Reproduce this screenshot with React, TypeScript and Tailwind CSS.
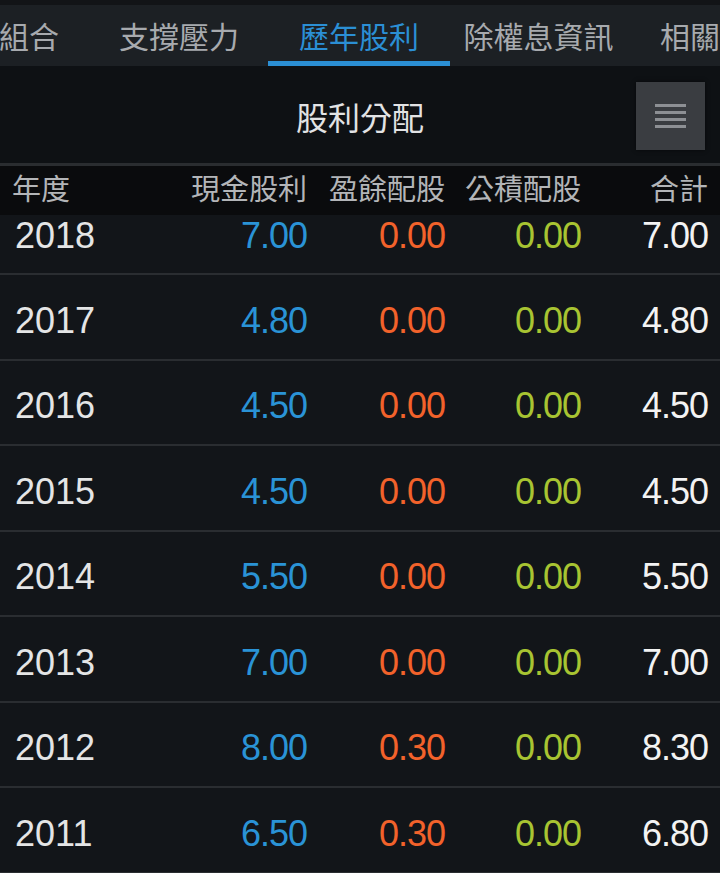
const tabs = [
  { label: '組合', w: 'w-[122px]', inner: 'justify-center' },
  { label: '支撐壓力', w: 'w-[178px]', inner: 'justify-center' },
  { label: '歷年股利', w: 'w-[182px]', inner: 'justify-center', active: true },
  { label: '除權息資訊', w: 'w-[177px]', inner: 'justify-center' },
  { label: '相關', w: 'w-[100px]', inner: 'justify-start pl-[33px]' },
]

const rows = [
  ['2018', '7.00', '0.00', '0.00', '7.00'],
  ['2017', '4.80', '0.00', '0.00', '4.80'],
  ['2016', '4.50', '0.00', '0.00', '4.50'],
  ['2015', '4.50', '0.00', '0.00', '4.50'],
  ['2014', '5.50', '0.00', '0.00', '5.50'],
  ['2013', '7.00', '0.00', '0.00', '7.00'],
  ['2012', '8.00', '0.30', '0.00', '8.30'],
  ['2011', '6.50', '0.30', '0.00', '6.80'],
]

const cjk = "font-['Noto_Sans_CJK_TC','Noto_Sans_CJK_SC',sans-serif]"
const num = "font-['Liberation_Sans',Arial,sans-serif]"

function MenuButton() {
  return (
    <button className="w-[69px] h-[68px] bg-[#3a3d41] flex flex-col items-center justify-center gap-[4px] shadow-[0_0_4px_rgba(0,0,0,0.6)]">
      <span className="block w-[31px] h-[3px] bg-[#8d9094]" />
      <span className="block w-[31px] h-[3px] bg-[#8d9094]" />
      <span className="block w-[31px] h-[3px] bg-[#8d9094]" />
      <span className="block w-[31px] h-[3px] bg-[#8d9094]" />
    </button>
  )
}

export default function App() {
  return (
    <div className={`w-[720px] h-[873px] overflow-hidden bg-[#121519] ${cjk}`}>
      {/* tab strip */}
      <div className="h-[5px] bg-[#121417]" />
      <div className="h-[61px] bg-[#1c2024] overflow-hidden">
        <div className="flex ml-[-32px] h-full">
          {tabs.map((t) => (
            <div key={t.label} className={`${t.w} shrink-0 h-full flex flex-col whitespace-nowrap`}>
              <div className={`flex flex-1 ${t.inner}`}>
                <span
                  className={`pt-[10px] text-[30px] leading-[40px] ${
                    t.active ? 'text-[#2b8fd4]' : 'text-[#a7aaae]'
                  }`}
                >
                  {t.label}
                </span>
              </div>
              <span className={`block w-full h-[5px] ${t.active ? 'bg-[#2b8fd4]' : ''}`} />
            </div>
          ))}
        </div>
      </div>

      {/* title */}
      <div className="h-[97px] bg-[#0e1114] flex items-center justify-center relative">
        <h1 className="text-[32px] text-[#e2e3e4] pt-[2px]">股利分配</h1>
        <div className="absolute right-[15px] top-[16px]">
          <MenuButton />
        </div>
      </div>
      <div className="h-[3px] bg-[#2a2d30]" />

      {/* table header */}
      <div className="h-[49px] bg-[#0a0b0d] grid grid-cols-[120px_187px_138px_136px_127px] items-center text-[29px] text-[#b3b5b8] pb-[6px]">
        <div className="pl-[12px]">年度</div>
        <div className="text-right">現金股利</div>
        <div className="text-right">盈餘配股</div>
        <div className="text-right">公積配股</div>
        <div className="text-right">合計</div>
      </div>

      {/* rows */}
      <div className={num}>
        {rows.map((r, i) => (
          <div
            key={r[0]}
            className={`grid grid-cols-[120px_187px_138px_136px_127px] items-center text-[36px] leading-[40px] border-b-2 border-[#2a2d31] ${
              i === 0 ? 'h-[60px] pb-[17px]' : 'h-[85.5px] pt-[8px]'
            }`}
          >
            <div className="pl-[15px] text-[#e4e5e6]">{r[0]}</div>
            <div className="text-right tracking-[-1px] text-[#2a93d6]">{r[1]}</div>
            <div className="text-right tracking-[-1px] text-[#f2622b]">{r[2]}</div>
            <div className="text-right tracking-[-1px] text-[#a8c432]">{r[3]}</div>
            <div className="text-right tracking-[-1px] text-[#f3f3f3]">{r[4]}</div>
          </div>
        ))}
      </div>
    </div>
  )
}
